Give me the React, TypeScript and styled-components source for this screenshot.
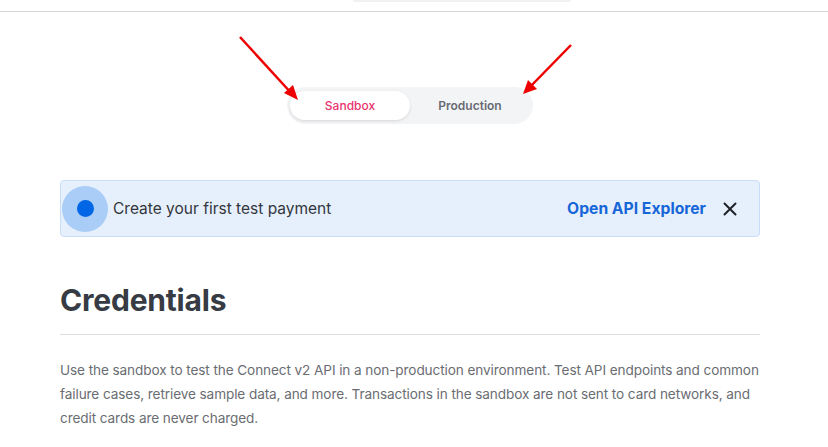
import styled, { createGlobalStyle } from "styled-components";

const Global = createGlobalStyle`
  body {
    margin: 0;
    background: #ffffff;
    font-family: Inter, "Noto Sans", sans-serif;
  }
`;

const Page = styled.div`
  position: relative;
  width: 828px;
  height: 447px;
  overflow: hidden;
`;

const TopBar = styled.header`
  height: 11px;
  border-bottom: 1px solid #d6d6d6;
  display: flex;
  padding-left: 353px;
`;

const SearchStub = styled.div`
  width: 218px;
  height: 2px;
  background: #f1f1f1;
  border-radius: 0 0 4px 4px;
`;

const Content = styled.main`
  width: 700px;
  padding-left: 60px;
  display: flex;
  flex-direction: column;
`;

const Toggle = styled.div`
  align-self: center;
  margin-top: 75px;
  display: flex;
  padding: 4px 3px;
  background: #f3f4f6;
  border-radius: 20px;
`;

const ToggleItem = styled.button<{ $active?: boolean }>`
  width: 120px;
  height: 29px;
  border: none;
  border-radius: 15px;
  font-family: Inter, sans-serif;
  font-size: 12px;
  font-weight: ${(p) => (p.$active ? 500 : 600)};
  color: ${(p) => (p.$active ? "#e8336d" : "#676b73")};
  background: ${(p) => (p.$active ? "#ffffff" : "transparent")};
  box-shadow: ${(p) => (p.$active ? "0 1px 3px rgba(0,0,0,0.12)" : "none")};
  cursor: pointer;
`;

const Banner = styled.div`
  margin-top: 56px;
  height: 55px;
  display: flex;
  align-items: center;
  background: #e6f0fd;
  border: 1px solid #c9ddf8;
  border-radius: 4px;
  padding-right: 22px;
`;

const Pulse = styled.div`
  width: 46px;
  height: 46px;
  margin-left: 1px;
  border-radius: 50%;
  background: #a9cdf6;
  display: flex;
  align-items: center;
  justify-content: center;
`;

const Dot = styled.div`
  width: 17px;
  height: 17px;
  border-radius: 50%;
  background: #0066e5;
`;

const BannerText = styled.span`
  margin-left: 5px;
  flex: 1;
  font-size: 15.5px;
  color: #33363b;
`;

const BannerLink = styled.a`
  font-size: 15.7px;
  font-weight: 700;
  color: #1766d8;
  text-decoration: none;
  margin-right: 17px;
`;

const Close = styled.button`
  border: none;
  background: none;
  padding: 0;
  display: flex;
  cursor: pointer;
`;

const Heading = styled.h1`
  margin: 44px 0 0;
  font-size: 30px;
  font-weight: 700;
  color: #363b44;
  letter-spacing: -0.2px;
  line-height: 38px;
  padding-bottom: 15px;
  border-bottom: 1px solid #dcdcdc;
`;

const Body = styled.p`
  margin: 23px 0 0;
  font-size: 13.6px;
  letter-spacing: -0.1px;
  line-height: 24px;
  color: #6a6d72;
`;

const Arrows = styled.svg`
  position: absolute;
  left: 0;
  top: 0;
  pointer-events: none;
`;

export default function App() {
  return (
    <Page>
      <Global />
      <TopBar>
        <SearchStub />
      </TopBar>
      <Content>
        <Toggle>
          <ToggleItem $active>Sandbox</ToggleItem>
          <ToggleItem>Production</ToggleItem>
        </Toggle>
        <Banner>
          <Pulse>
            <Dot />
          </Pulse>
          <BannerText>Create your first test payment</BannerText>
          <BannerLink href="#">Open API Explorer</BannerLink>
          <Close aria-label="Close">
            <svg width="14" height="14" viewBox="0 0 14 14">
              <path d="M1.5 1.5 L12.5 12.5 M12.5 1.5 L1.5 12.5" stroke="#1f2226" strokeWidth="2" strokeLinecap="round" />
            </svg>
          </Close>
        </Banner>
        <Heading>Credentials</Heading>
        <Body>
          Use the sandbox to test the Connect v2 API in a non-production environment. Test API endpoints and common
          failure cases, retrieve sample data, and more. Transactions in the sandbox are not sent to card networks, and
          credit cards are never charged.
        </Body>
      </Content>
      <Arrows width="828" height="447">
        <line x1="240" y1="37" x2="293" y2="95" stroke="#ee0000" strokeWidth="2.5" />
        <polygon points="298,100 284,93 293,85" fill="#ee0000" />
        <line x1="571" y1="45" x2="528" y2="89" stroke="#ee0000" strokeWidth="2.5" />
        <polygon points="523,94 528,80 537,89" fill="#ee0000" />
      </Arrows>
    </Page>
  );
}
